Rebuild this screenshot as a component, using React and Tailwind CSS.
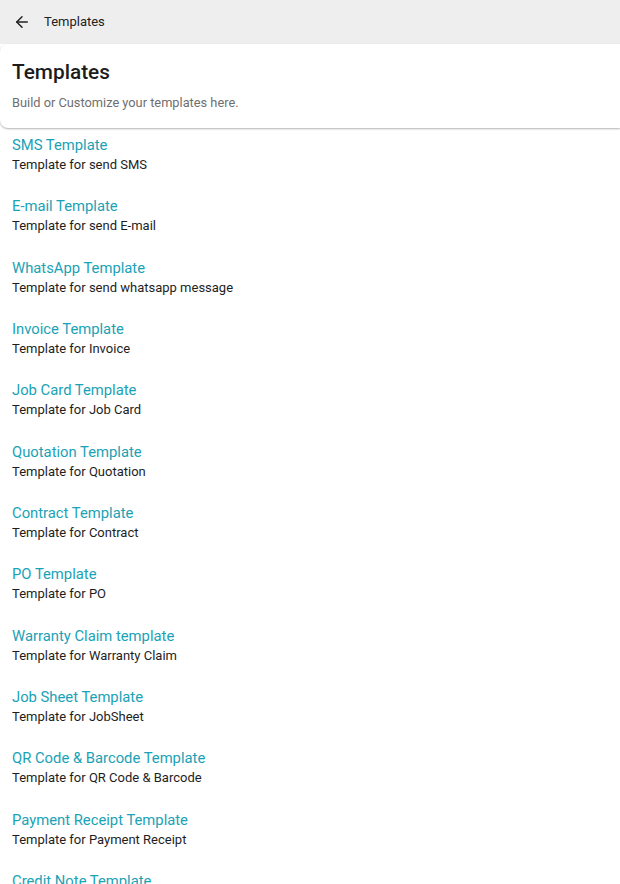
import { ArrowLeft } from "lucide-react";

const templates = [
  { title: "SMS Template", desc: "Template for send SMS" },
  { title: "E-mail Template", desc: "Template for send E-mail" },
  { title: "WhatsApp Template", desc: "Template for send whatsapp message" },
  { title: "Invoice Template", desc: "Template for Invoice" },
  { title: "Job Card Template", desc: "Template for Job Card" },
  { title: "Quotation Template", desc: "Template for Quotation" },
  { title: "Contract Template", desc: "Template for Contract" },
  { title: "PO Template", desc: "Template for PO" },
  { title: "Warranty Claim template", desc: "Template for Warranty Claim" },
  { title: "Job Sheet Template", desc: "Template for JobSheet" },
  { title: "QR Code & Barcode Template", desc: "Template for QR Code & Barcode" },
  { title: "Payment Receipt Template", desc: "Template for Payment Receipt" },
  { title: "Credit Note Template", desc: "Template for Credit Note" },
];

export default function App() {
  return (
    <div className="h-[884px] overflow-hidden bg-white font-['Roboto',sans-serif]">
      {/* top bar */}
      <div className="flex h-[44px] items-center bg-[#eeeeee] pl-[13px]">
        <ArrowLeft size={18} strokeWidth={2} className="text-[#222]" />
        <span className="ml-[13px] text-[13px] text-[#222]">Templates</span>
      </div>

      {/* page header card */}
      <div className="h-[84px] rounded-l-[8px] bg-white px-3 pt-[16px] shadow-[0_1px_2px_rgba(0,0,0,0.3)]">
        <h1 className="text-[20.8px] leading-[25px] font-medium text-[#1c1c1c]">Templates</h1>
        <p className="mt-[9px] text-[12.8px] leading-[17px] text-[#6f6f6f]">
          Build or Customize your templates here.
        </p>
      </div>

      {/* list */}
      <div className="px-3 pt-[7px]">
        {templates.map((t) => (
          <div key={t.title} className="h-[61.33px]">
            <div className="text-[14.8px] leading-[20px] text-[#1aa2b6]">{t.title}</div>
            <div className="text-[13px] leading-[19px] text-[#1e1e1e]">{t.desc}</div>
          </div>
        ))}
      </div>
    </div>
  );
}
